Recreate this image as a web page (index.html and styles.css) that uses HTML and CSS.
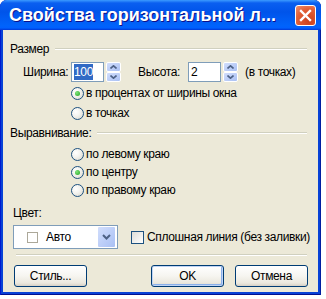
FILE: index.html
```html
<!DOCTYPE html>
<html lang="ru">

<head>
    <meta charset="UTF-8">
    <title>Свойства горизонтальной линии</title>
    <link rel="stylesheet" href="styles.css">
</head>

<body>
    <div class="window">
        <div class="titlebar">
            <span class="title">Свойства горизонтальной л...</span>
            <span class="close">
                <svg width="13" height="13" viewBox="0 0 13 13">
                    <path d="M2 2 L11 11 M11 2 L2 11" stroke="#fff" stroke-width="2.4" stroke-linecap="square" fill="none" />
                </svg>
            </span>
        </div>

        <div class="client">
            <div class="group-head">
                <span>Размер</span>
                <i class="rule"></i>
            </div>

            <div class="size-row">
                <span class="lbl-width">Ширина:</span>
                <div class="spin">
                    <span class="edit"><span class="selected">100</span></span>
                    <span class="spin-btn">
                        <span class="half"><svg width="7" height="4" viewBox="0 0 7 4"><path d="M0.5 3.5 L3.5 0.8 L6.5 3.5" stroke="#4d6185" stroke-width="1.6" fill="none" /></svg></span>
                        <span class="half"><svg width="7" height="4" viewBox="0 0 7 4"><path d="M0.5 0.5 L3.5 3.2 L6.5 0.5" stroke="#4d6185" stroke-width="1.6" fill="none" /></svg></span>
                    </span>
                </div>
                <span class="lbl-height">Высота:</span>
                <div class="spin">
                    <span class="edit">2</span>
                    <span class="spin-btn">
                        <span class="half"><svg width="7" height="4" viewBox="0 0 7 4"><path d="M0.5 3.5 L3.5 0.8 L6.5 3.5" stroke="#4d6185" stroke-width="1.6" fill="none" /></svg></span>
                        <span class="half"><svg width="7" height="4" viewBox="0 0 7 4"><path d="M0.5 0.5 L3.5 3.2 L6.5 0.5" stroke="#4d6185" stroke-width="1.6" fill="none" /></svg></span>
                    </span>
                </div>
                <span class="unit">(в точках)</span>
            </div>

            <div class="options size-options">
                <div class="option"><span class="radio checked"></span>в процентах от ширины окна</div>
                <div class="option"><span class="radio"></span>в точках</div>
            </div>

            <div class="group-head align-head">
                <span>Выравнивание:</span>
                <i class="rule"></i>
            </div>

            <div class="options align-options">
                <div class="option"><span class="radio"></span>по левому краю</div>
                <div class="option"><span class="radio checked"></span>по центру</div>
                <div class="option"><span class="radio"></span>по правому краю</div>
            </div>

            <div class="color-label">Цвет:</div>

            <div class="color-row">
                <div class="combo">
                    <span class="swatch"></span>
                    <span class="combo-text">Авто</span>
                    <span class="drop">
                        <svg width="9" height="6" viewBox="0 0 9 6"><path d="M1 1 L4.5 4.5 L8 1" stroke="#4d6185" stroke-width="2" fill="none" /></svg>
                    </span>
                </div>
                <div class="check-option"><span class="checkbox"></span>Сплошная линия (без заливки)</div>
            </div>

            <i class="separator"></i>

            <div class="buttons">
                <span class="btn">Стиль...</span>
                <span class="spacer"></span>
                <span class="btn default">OK</span>
                <span class="btn">Отмена</span>
            </div>
        </div>
    </div>
</body>

</html>
```

FILE: styles.css
```css
body {
    margin: 0;
    background: #fff;
    font-family: "Liberation Sans", Arial, sans-serif;
    font-size: 12px;
    letter-spacing: -0.35px;
    color: #000;
    white-space: nowrap;
}

.window {
    width: 321px;
    height: 295px;
    box-sizing: border-box;
    padding: 0 3px 3px;
    display: flex;
    flex-direction: column;
    background: #0842d6;
    border-radius: 7px 7px 0 0;
    box-shadow: inset 1px 0 #0019cf, inset -1px 0 #001ea0, inset 0 -1px #001090;
}

.titlebar {
    height: 30px;
    flex: none;
    display: flex;
    align-items: center;
    margin: 0 -3px;
    padding: 0 5px 0 9px;
    border-radius: 7px 7px 0 0;
    background: linear-gradient(to bottom, #3c9bff 0%, #0a5ff0 10%, #0054ea 40%, #0063fb 85%, #0060fe 93%, #0038d6 100%);
}

.title {
    flex: 1;
    color: #fff;
    font-weight: bold;
    font-size: 18px;
    letter-spacing: 0;
    text-shadow: 1px 1px #0f1089;
}

.close {
    width: 21px;
    height: 21px;
    box-sizing: border-box;
    display: flex;
    align-items: center;
    justify-content: center;
    border: 1px solid #fff;
    border-radius: 3px;
    background: radial-gradient(circle at 70% 80%, #c9411e 0%, #e35f36 60%, #ee9173 100%);
}

.client {
    flex: 1;
    background: #ece9d8;
    padding: 11px 10px 0 7px;
    display: flex;
    flex-direction: column;
}

.group-head {
    height: 16px;
    display: flex;
    align-items: center;
    gap: 6px;
    margin-right: 1px;
}

.rule {
    flex: 1;
    height: 1px;
    background: #d0d0bf;
    border-bottom: 1px solid #fff;
}

.size-row {
    height: 20px;
    margin-top: 5px;
    display: flex;
    align-items: center;
    padding-left: 13px;
}

.lbl-width {
    width: 48px;
}

.lbl-height {
    width: 50px;
    margin-left: 17px;
}

.unit {
    margin-left: 7px;
}

.spin {
    display: flex;
    gap: 2px;
}

.edit {
    width: 33px;
    height: 20px;
    box-sizing: border-box;
    border: 1px solid #7f9db9;
    background: #fff;
    padding: 2px 0 0 2px;
}

.selected {
    background: #316ac5;
    color: #fff;
    padding: 1px 0;
}

.spin-btn {
    width: 15px;
    height: 20px;
    display: flex;
    flex-direction: column;
}

.half {
    flex: 1;
    display: flex;
    align-items: center;
    justify-content: center;
    background: linear-gradient(to bottom right, #d2defc, #a9c0f4);
    border: 1px solid #fff;
    border-radius: 2px;
}

.options {
    display: flex;
    flex-direction: column;
    padding-left: 61px;
}

.size-options {
    margin-top: 1px;
}

.size-options .option {
    height: 20px;
}

.option {
    height: 18px;
    display: flex;
    align-items: center;
    gap: 2px;
}

.radio {
    width: 13px;
    height: 13px;
    box-sizing: border-box;
    border-radius: 50%;
    border: 1px solid #1c5180;
    background: radial-gradient(circle at 35% 35%, #fff 0%, #f4f4f0 40%, #d6d4c8 100%);
    display: flex;
    align-items: center;
    justify-content: center;
}

.radio.checked::after {
    content: "";
    width: 5px;
    height: 5px;
    border-radius: 50%;
    background: radial-gradient(circle at 35% 35%, #7fe57b, #21a121);
}

.align-head {
    margin-top: 2px;
}

.align-options {
    margin-top: 4px;
}

.color-label {
    height: 14px;
    line-height: 14px;
    margin-top: 7px;
    padding-left: 3px;
}

.color-row {
    height: 24px;
    margin-top: 5px;
    padding-left: 3px;
    display: flex;
    align-items: center;
}

.combo {
    flex: none;
    width: 105px;
    height: 24px;
    box-sizing: border-box;
    border: 1px solid #7f9db9;
    background: #fff;
    display: flex;
    align-items: center;
    padding: 0 1px 0 13px;
}

.swatch {
    width: 11px;
    height: 11px;
    box-sizing: border-box;
    border: 1px solid #aca899;
}

.combo-text {
    flex: 1;
    margin-left: 8px;
}

.drop {
    width: 17px;
    height: 20px;
    display: flex;
    align-items: center;
    justify-content: center;
    background: linear-gradient(to bottom right, #d2defc, #a9c0f4);
    border: 1px solid #fff;
    border-radius: 2px;
}

.check-option {
    display: flex;
    align-items: center;
    gap: 3px;
    margin-left: 13px;
}

.checkbox {
    width: 13px;
    height: 13px;
    box-sizing: border-box;
    border: 1px solid #1c5180;
    background: linear-gradient(to bottom right, #dcdcd7, #fff);
}

.separator {
    display: block;
    height: 1px;
    margin: 5px 1px 0 6px;
    background: #d0d0bf;
    border-bottom: 1px solid #fff;
}

.buttons {
    margin-top: 9px;
    padding-left: 4px;
    display: flex;
    gap: 11px;
}

.spacer {
    flex: 1;
}

.btn {
    width: 73px;
    height: 22px;
    box-sizing: border-box;
    border: 1px solid #003c74;
    border-radius: 3px;
    display: flex;
    align-items: center;
    justify-content: center;
    background: linear-gradient(to bottom, #fff 0%, #f6f5f0 50%, #ebe8de 85%, #d6d0c5 100%);
}

.btn.default {
    box-shadow: inset 0 0 0 1px #c0d4f4, inset -1px -1px 0 1px #8ab0ea;
}
```
